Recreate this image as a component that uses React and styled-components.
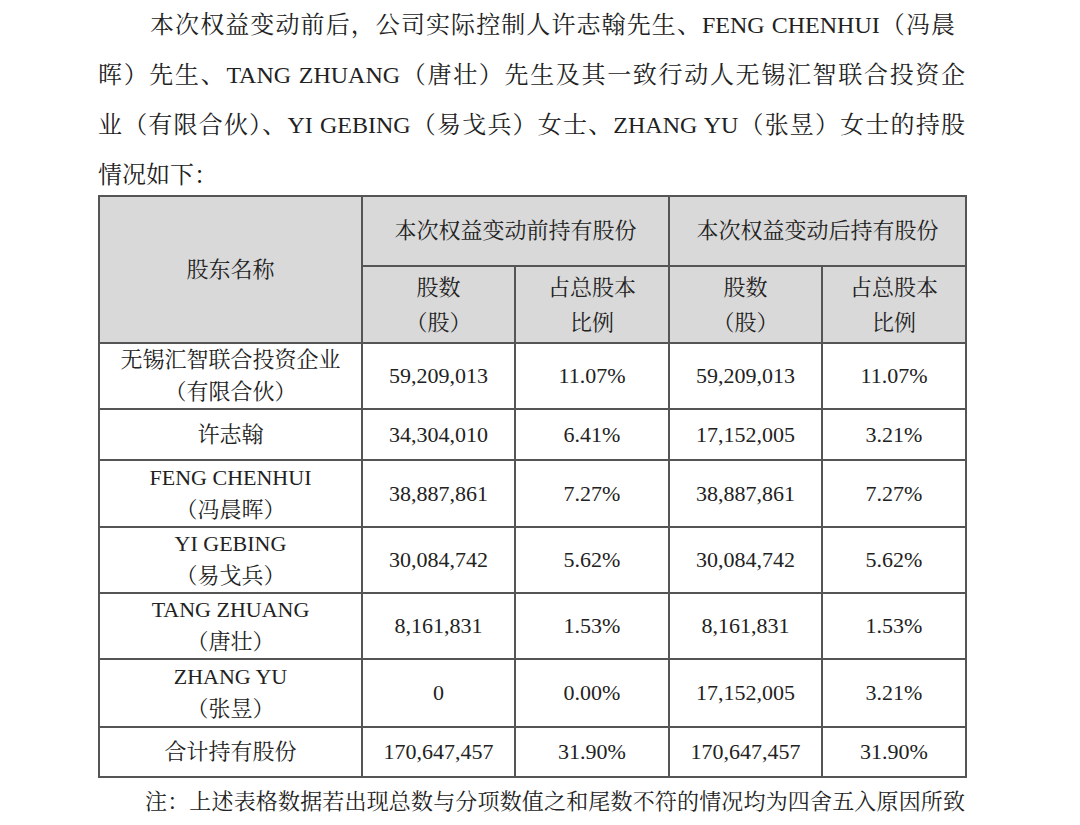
import React from "react";
import styled, { createGlobalStyle } from "styled-components";

const FONT = `"Liberation Serif", "Noto Serif CJK SC", "Noto Sans CJK SC", serif`;

const Global = createGlobalStyle`
  html, body { margin: 0; padding: 0; background: #fff; }
  body { width: 1080px; height: 825px; overflow: hidden; }
`;

const Page = styled.div`
  width: 867px;
  padding: 0 0 0 98px;
  font-family: ${FONT};
  color: #222;
`;

const Paragraph = styled.div`
  font-size: 24px;
  line-height: 50px;
  margin-bottom: -5px;
`;

const Line = styled.div`
  text-align: ${(p) => (p.$last ? "left" : "justify")};
  text-align-last: ${(p) => (p.$last ? "left" : "justify")};
  padding-left: ${(p) => p.$indent || 0}px;
  padding-right: ${(p) => p.$endGap || 0}px;
`;

const Table = styled.table`
  width: 867px;
  border-collapse: collapse;
  table-layout: fixed;
  font-size: 22px;
  line-height: 32px;
  color: #222;
`;

const Col = styled.col`
  width: ${(p) => p.$w}px;
`;

const Row = styled.tr`
  height: ${(p) => p.$h}px;
`;

const HeadCell = styled.th`
  background: #d9d9d9;
  font-weight: 400;
  border: 2px solid #555;
  text-align: center;
  vertical-align: middle;
  padding: 0;
  line-height: ${(p) => p.$lh || 32}px;
`;

const Cell = styled.td`
  border: 2px solid #555;
  text-align: center;
  vertical-align: middle;
  padding: 0;
`;

const CellLine = styled.div`
  white-space: nowrap;
`;

const Note = styled.div`
  font-size: 22px;
  line-height: 48px;
  padding-left: 47px;
  text-align: justify;
  text-align-last: justify;
`;

const rows = [
  { name: ["无锡汇智联合投资企业", "（有限合伙）"], v: ["59,209,013", "11.07%", "59,209,013", "11.07%"], h: 66 },
  { name: ["许志翰"], v: ["34,304,010", "6.41%", "17,152,005", "3.21%"], h: 51 },
  { name: ["FENG CHENHUI", "（冯晨晖）"], v: ["38,887,861", "7.27%", "38,887,861", "7.27%"], h: 67 },
  { name: ["YI GEBING", "（易戈兵）"], v: ["30,084,742", "5.62%", "30,084,742", "5.62%"], h: 66 },
  { name: ["TANG ZHUANG", "（唐壮）"], v: ["8,161,831", "1.53%", "8,161,831", "1.53%"], h: 65 },
  { name: ["ZHANG YU", "（张昱）"], v: ["0", "0.00%", "17,152,005", "3.21%"], h: 68 },
  { name: ["合计持有股份"], v: ["170,647,457", "31.90%", "170,647,457", "31.90%"], h: 50 },
];

export default function App() {
  return (
    <>
      <Global />
      <Page>
        <Paragraph>
          <Line $indent={52} $endGap={10}>
            本次权益变动前后，公司实际控制人许志翰先生、FENG CHENHUI（冯晨
          </Line>
          <Line>晖）先生、TANG ZHUANG（唐壮）先生及其一致行动人无锡汇智联合投资企</Line>
          <Line>业（有限合伙）、YI GEBING（易戈兵）女士、ZHANG YU（张昱）女士的持股</Line>
          <Line $last>情况如下：</Line>
        </Paragraph>
        <Table>
          <colgroup>
            <Col $w={263} />
            <Col $w={153} />
            <Col $w={154} />
            <Col $w={153} />
            <Col $w={144} />
          </colgroup>
          <thead>
            <Row $h={70}>
              <HeadCell rowSpan={2}>股东名称</HeadCell>
              <HeadCell colSpan={2}>本次权益变动前持有股份</HeadCell>
              <HeadCell colSpan={2}>本次权益变动后持有股份</HeadCell>
            </Row>
            <Row $h={77}>
              <HeadCell $lh={35}>
                <CellLine>股数</CellLine>
                <CellLine>（股）</CellLine>
              </HeadCell>
              <HeadCell $lh={35}>
                <CellLine>占总股本</CellLine>
                <CellLine>比例</CellLine>
              </HeadCell>
              <HeadCell $lh={35}>
                <CellLine>股数</CellLine>
                <CellLine>（股）</CellLine>
              </HeadCell>
              <HeadCell $lh={35}>
                <CellLine>占总股本</CellLine>
                <CellLine>比例</CellLine>
              </HeadCell>
            </Row>
          </thead>
          <tbody>
            {rows.map((r, i) => (
              <Row key={i} $h={r.h}>
                <Cell>
                  {r.name.map((n, j) => (
                    <CellLine key={j}>{n}</CellLine>
                  ))}
                </Cell>
                {r.v.map((x, j) => (
                  <Cell key={j}>{x}</Cell>
                ))}
              </Row>
            ))}
          </tbody>
        </Table>
        <Note>注：上述表格数据若出现总数与分项数值之和尾数不符的情况均为四舍五入原因所致</Note>
      </Page>
    </>
  );
}
